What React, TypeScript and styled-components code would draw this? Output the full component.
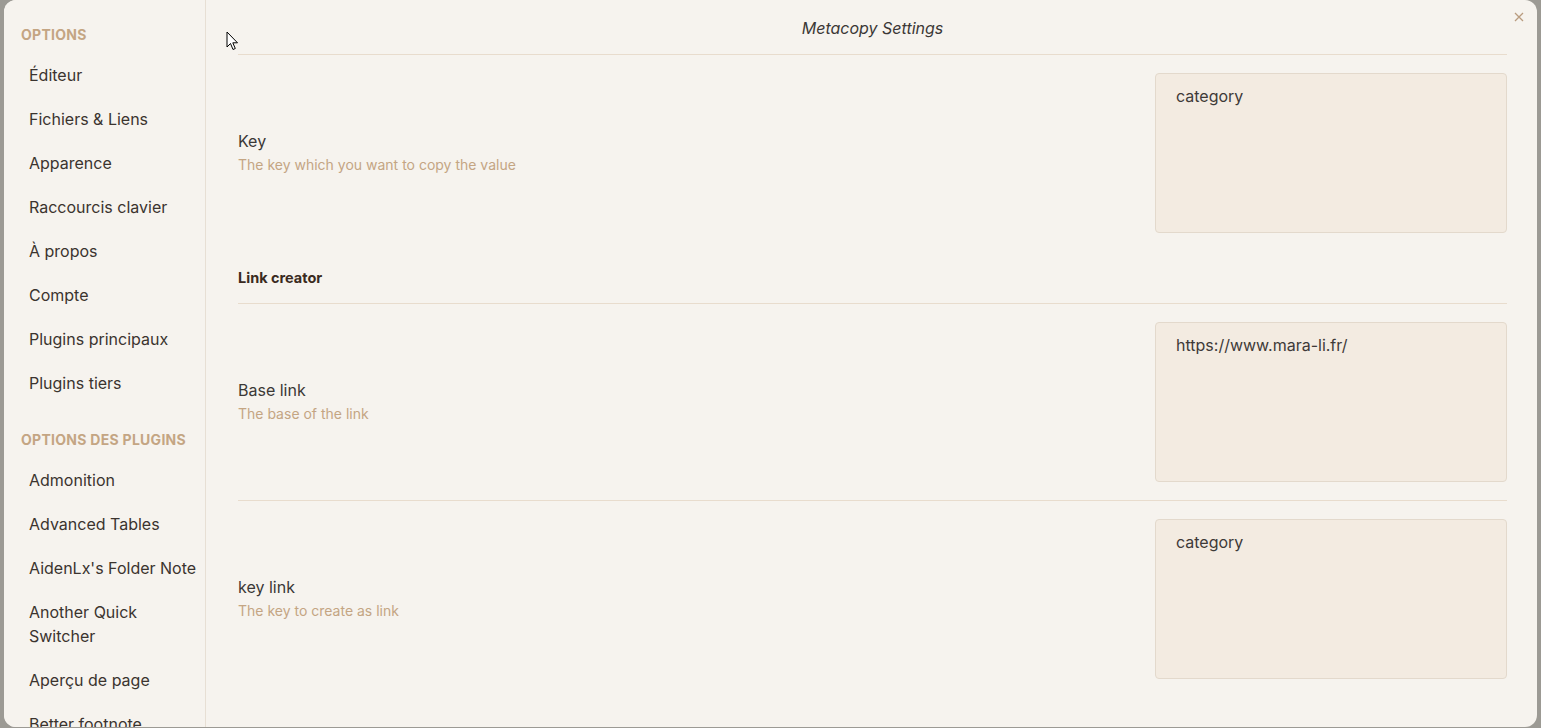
import React from "react";
import styled, { createGlobalStyle } from "styled-components";

const Global = createGlobalStyle`
  html, body { margin: 0; padding: 0; }
  body {
    background: #9c9a94;
    font-family: Inter, "Noto Sans", sans-serif;
    overflow: hidden;
  }
  * { box-sizing: border-box; }
`;

const Backdrop = styled.div`
  width: 1541px;
  height: 728px;
  padding: 0 4px 1px 4px;
  display: flex;
`;

const Modal = styled.div`
  flex: 1;
  display: flex;
  background: #f6f3ee;
  border-radius: 12px;
  overflow: hidden;
  position: relative;
`;

const Sidebar = styled.nav`
  width: 202px;
  flex-shrink: 0;
  border-right: 1px solid #e7dfd4;
  background: #f6f3ee;
  padding: 23px 6px 0 17px;
  overflow: hidden;
`;

const NavHeader = styled.div<{ $gap?: number }>`
  font-size: 14px;
  font-weight: 700;
  letter-spacing: 0.02em;
  text-transform: uppercase;
  color: #c4a583;
  line-height: 24px;
  padding: 0 0 6px 0;
  margin-top: ${(p) => p.$gap ?? 0}px;
`;

const NavItem = styled.div`
  font-size: 16px;
  color: #3b342f;
  line-height: 24px;
  padding: 10px 2px 10px 8px;
`;

const Main = styled.main`
  flex: 1;
  padding: 0 30px 0 32px;
  overflow: hidden;
`;

const Title = styled.div`
  text-align: center;
  font-style: italic;
  font-size: 16px;
  color: #3b3836;
  line-height: 24px;
  padding: 16px 0 14px;
  border-bottom: 1px solid #e8dccd;
`;

const CloseBtn = styled.div`
  position: absolute;
  top: 11px;
  right: 12px;
  width: 12px;
  height: 12px;
  display: flex;
  align-items: center;
  justify-content: center;
`;

const Row = styled.div<{ $border?: boolean }>`
  display: flex;
  align-items: center;
  gap: 24px;
  padding: 18px 0;
  border-top: ${(p) => (p.$border ? "1px solid #e8dccd" : "none")};
`;

const Info = styled.div`
  flex: 1;
  margin-bottom: 2px;
`;

const Name = styled.div`
  font-size: 16px;
  color: #3b3836;
  line-height: 24px;
`;

const Desc = styled.div`
  font-size: 14px;
  color: #c4a583;
  line-height: 22px;
  margin-top: 1px;
`;

const TextArea = styled.div`
  width: 352px;
  height: 160px;
  background: #f3ebe1;
  border: 1px solid #e3d9cc;
  border-radius: 4px;
  padding: 10px 20px;
  font-size: 16px;
  line-height: 24px;
  color: #3e3a38;
`;

const Heading = styled.div`
  font-size: 14.5px;
  font-weight: 700;
  color: #3a2a20;
  line-height: 20px;
  padding: 17px 0 15px;
  border-bottom: 1px solid #e8dccd;
`;

const Cursor = styled.svg`
  position: absolute;
  left: 222px;
  top: 31px;
`;

const navTop = [
  "Éditeur",
  "Fichiers & Liens",
  "Apparence",
  "Raccourcis clavier",
  "À propos",
  "Compte",
  "Plugins principaux",
  "Plugins tiers",
];
const navPlugins = [
  "Admonition",
  "Advanced Tables",
  "AidenLx's Folder Note",
  "Another Quick Switcher",
  "Aperçu de page",
  "Better footnote",
];

export default function App() {
  return (
    <>
      <Global />
      <Backdrop>
        <Modal>
          <Sidebar>
            <NavHeader>Options</NavHeader>
            {navTop.map((n) => (
              <NavItem key={n}>{n}</NavItem>
            ))}
            <NavHeader $gap={23}>Options des plugins</NavHeader>
            {navPlugins.map((n) => (
              <NavItem key={n}>{n}</NavItem>
            ))}
          </Sidebar>
          <Main>
            <Title>Metacopy Settings</Title>
            <Row>
              <Info>
                <Name>Key</Name>
                <Desc>The key which you want to copy the value</Desc>
              </Info>
              <TextArea>category</TextArea>
            </Row>
            <Heading>Link creator</Heading>
            <Row>
              <Info>
                <Name>Base link</Name>
                <Desc>The base of the link</Desc>
              </Info>
              <TextArea>https://www.mara-li.fr/</TextArea>
            </Row>
            <Row $border>
              <Info>
                <Name>key link</Name>
                <Desc>The key to create as link</Desc>
              </Info>
              <TextArea>category</TextArea>
            </Row>
          </Main>
          <CloseBtn>
            <svg width="10" height="10" viewBox="0 0 10 10">
              <path d="M1 1L9 9M9 1L1 9" stroke="#b99c7f" strokeWidth="1.3" />
            </svg>
          </CloseBtn>
          <Cursor width="14" height="20" viewBox="0 0 14 20">
            <path
              d="M1 1 L1 16 L4.5 12.5 L7 18.5 L9.3 17.5 L6.8 11.8 L11.5 11.8 Z"
              fill="#fff"
              stroke="#000"
              strokeWidth="1"
              strokeLinejoin="round"
            />
          </Cursor>
        </Modal>
      </Backdrop>
    </>
  );
}
